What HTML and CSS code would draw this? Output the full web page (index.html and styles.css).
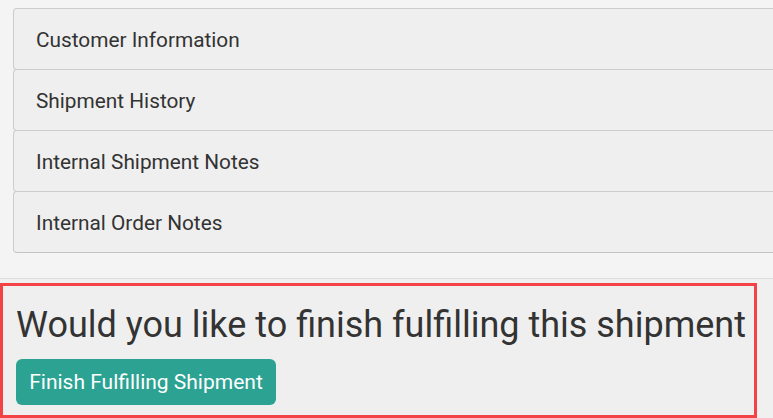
FILE: index.html
```html
<!DOCTYPE html>
<html>
<head>
<meta charset="utf-8">
<link rel="stylesheet" href="styles.css">
</head>
<body>
<div class="panels">
  <div class="panel"><span class="panel-title">Customer Information</span></div>
  <div class="panel"><span class="panel-title">Shipment History</span></div>
  <div class="panel"><span class="panel-title">Internal Shipment Notes</span></div>
  <div class="panel"><span class="panel-title">Internal Order Notes</span></div>
</div>
<div class="footer">
  <div class="finish">
    <h1 class="finish-title">Would you like to finish fulfilling this shipment</h1>
    <button class="btn-finish">Finish Fulfilling Shipment</button>
  </div>
</div>
</body>
</html>
```
FILE: styles.css
```css
html, body {
  margin: 0;
  padding: 0;
  background: #f4f4f4;
  font-family: Roboto, "Liberation Sans", sans-serif;
  color: #333;
  overflow: hidden;
}
.panels {
  padding-top: 8px;
  margin-left: 13px;
  margin-right: -20px;
}
.panel {
  height: 60px;
  border: 1px solid #cdcdcd;
  border-bottom-color: #c4c4c4;
  border-radius: 4px;
  background: #efefef;
  margin-bottom: -1px;
  display: flex;
  align-items: center;
  padding-left: 22px;
  box-sizing: content-box;
}
.panel-title {
  font-size: 20.8px;
  color: #333;
  padding-top: 2px;
}
.footer {
  margin-top: 26px;
  border-top: 1px solid #dedede;
  padding-top: 4px;
  background: #f0f0f0;
}
.finish {
  border: 3px solid #f44346;
  background: #efefef;
  padding: 0 0 10px 13px;
  box-sizing: content-box;
  width: 738px;
}
.finish-title {
  margin: 0;
  padding-top: 20px;
  font-size: 36px;
  font-weight: 400;
  line-height: 1.1;
  color: #333;
}
.btn-finish {
  margin-top: 13px;
  display: block;
  width: 260px;
  height: 46px;
  border: none;
  border-radius: 6px;
  background: #2ca292;
  color: #fff;
  font-family: Roboto, "Liberation Sans", sans-serif;
  font-size: 21px;
  padding: 0;
}
```
